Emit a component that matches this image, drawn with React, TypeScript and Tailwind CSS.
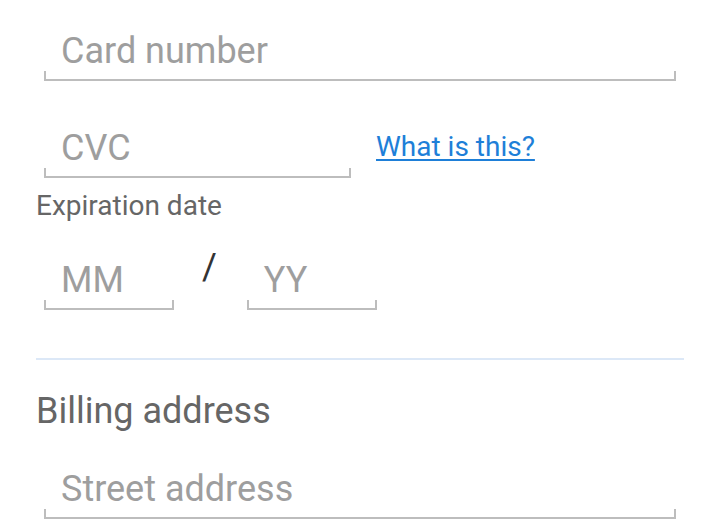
import React from 'react';

const Field: React.FC<{ placeholder: string; className?: string }> = ({ placeholder, className = '' }) => (
    <div className={`relative border-b-2 border-[#bdbdbd] pb-[7px] pl-[17px] ${className}`}>
        <span className="block text-[36px] leading-[42px] text-[#9e9e9e]">{placeholder}</span>
        <span className="absolute left-0 bottom-0 w-[2px] h-[8px] bg-[#bdbdbd]" />
        <span className="absolute right-0 bottom-0 w-[2px] h-[8px] bg-[#bdbdbd]" />
    </div>
);

export default function App() {
    return (
        <div className="w-[720px] h-[525px] overflow-hidden bg-white px-[36px] pt-[30px]" style={{ fontFamily: 'Roboto, "Noto Sans", sans-serif' }}>
            <Field placeholder="Card number" className="mx-[8px]" />

            <div className="flex items-end mt-[46px]">
                <Field placeholder="CVC" className="ml-[8px] w-[307px]" />
                <a href="#" className="ml-[25px] mb-[15px] text-[28px] leading-[33px] text-[#1e7fd8] underline underline-offset-[3px]">What is this?</a>
            </div>

            <div className="mt-[12px] text-[28px] leading-[32px] text-[#666666]">Expiration date</div>

            <div className="flex items-end mt-[37px]">
                <Field placeholder="MM" className="ml-[8px] w-[130px]" />
                <span className="self-start -mt-[13px] ml-[28px] mr-[30px] text-[36px] leading-[42px] text-[#333333]">/</span>
                <Field placeholder="YY" className="w-[130px]" />
            </div>

            <div className="mt-[48px] h-[2px] bg-[#dce8f7]" />

            <div className="mt-[30px] text-[36px] leading-[42px] text-[#666666]">Billing address</div>

            <Field placeholder="Street address" className="mx-[8px] mt-[36px]" />
        </div>
    );
}
